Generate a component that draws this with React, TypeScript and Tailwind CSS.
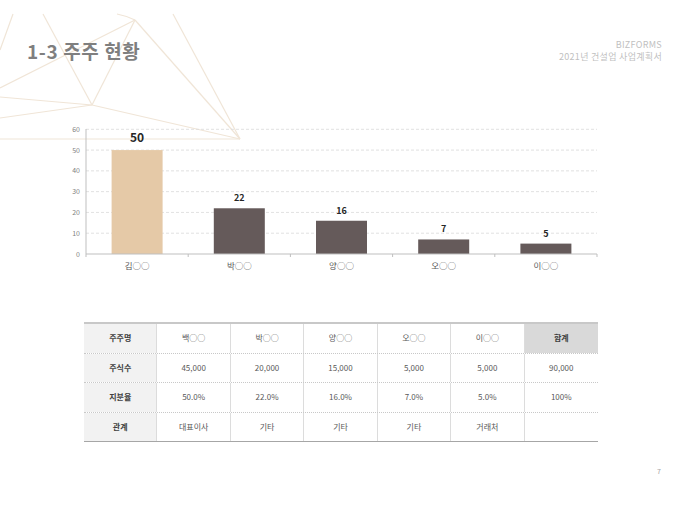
import React from "react";

const bars = [
  { name: "김○○", v: 50, color: "#E5C9A7", big: true },
  { name: "박○○", v: 22, color: "#655A5A" },
  { name: "양○○", v: 16, color: "#655A5A" },
  { name: "오○○", v: 7, color: "#655A5A" },
  { name: "이○○", v: 5, color: "#655A5A" },
];

function Chart() {
  const x0 = 26;
  const x1 = 537;
  const y0 = 134;
  const unit = (134 - 9.3) / 60;
  const cw = (x1 - x0) / 5;
  const ticks = [0, 10, 20, 30, 40, 50, 60];
  return (
    <svg width="550" height="160" viewBox="0 0 550 160" className="block">
      {ticks.map((t) => {
        const y = y0 - t * unit;
        return (
          <g key={t}>
            {t > 0 && (
              <line x1={x0} y1={y} x2={x1} y2={y} stroke="#D9D9D9" strokeWidth="0.8" strokeDasharray="3 2" />
            )}
            <text x="20" y={y + 2.5} fontSize="7" fill="#7F7F7F" textAnchor="end">
              {t}
            </text>
          </g>
        );
      })}
      <line x1={x0} y1={9} x2={x0} y2={y0} stroke="#BFBFBF" strokeWidth="1" />
      {bars.map((b, i) => {
        const cx = x0 + cw / 2 + i * cw;
        const h = b.v * unit;
        return (
          <g key={b.name}>
            <rect x={cx - 25.5} y={y0 - h} width="51" height={h} fill={b.color} />
            <text
              x={cx}
              y={b.big ? y0 - h - 8 : y0 - h - 7}
              fontSize={b.big ? 12 : 9}
              fontWeight="700"
              fill="#262626"
              textAnchor="middle"
            >
              {b.v}
            </text>
            <text x={cx} y={149} fontSize="8.5" fill="#595959" textAnchor="middle">
              {b.name}
            </text>
          </g>
        );
      })}
      <line x1={x0} y1={y0} x2={x1} y2={y0} stroke="#BFBFBF" strokeWidth="1" />
      {[0, 1, 2, 3, 4, 5].map((i) => (
        <line key={i} x1={x0 + i * cw} y1={y0} x2={x0 + i * cw} y2={y0 + 3} stroke="#BFBFBF" strokeWidth="1" />
      ))}
    </svg>
  );
}

const rows = [
  ["주주명", "백○○", "박○○", "양○○", "오○○", "이○○", "합계"],
  ["주식수", "45,000", "20,000", "15,000", "5,000", "5,000", "90,000"],
  ["지분율", "50.0%", "22.0%", "16.0%", "7.0%", "5.0%", "100%"],
  ["관계", "대표이사", "기타", "기타", "기타", "거래처", ""],
];

function Table() {
  return (
    <div className="ml-[84px] w-[514px] border-t-2 border-b border-t-[#C8C8C8] border-b-[#A6A6A6]">
      {rows.map((r, ri) => (
        <div
          key={ri}
          className={
            ri < rows.length - 1
              ? "grid grid-cols-7 h-[29.5px] border-b border-dotted border-b-[#C8C8C8]"
              : "grid grid-cols-7 h-[28.5px]"
          }
        >
          {r.map((c, ci) => {
            const isFirst = ci === 0;
            const isTotalHead = ri === 0 && ci === 6;
            let cls = "flex items-center justify-center text-[8px] ";
            if (isFirst) cls += "bg-[#F2F2F2] font-bold text-[#404040] ";
            else if (isTotalHead) cls += "bg-[#D9D9D9] font-bold text-[#404040] ";
            else cls += "text-[#595959] ";
            if (ci < 6) cls += "border-r border-r-[#DCDCDC]";
            return (
              <div key={ci} className={cls}>
                {c}
              </div>
            );
          })}
        </div>
      ))}
    </div>
  );
}

function Deco() {
  const s = "#F0E5D7";
  const lines: [number, number, number, number][] = [
    [13, 14, 0, 50],
    [43, 14, 92, 105],
    [135, 20, 92, 105],
    [135, 20, 0, 88],
    [135, 20, 240, 139],
    [173, 14, 240, 139],
    [92, 105, 0, 97],
    [92, 105, 0, 118],
    [92, 105, 240, 139],
    [0, 139, 240, 139],
  ];
  return (
    <svg className="absolute left-0 top-0" width="260" height="150" viewBox="0 0 260 150">
      {lines.map((l, i) => (
        <line key={i} x1={l[0]} y1={l[1]} x2={l[2]} y2={l[3]} stroke={s} strokeWidth="1.2" />
      ))}
      <path d="M117 14 Q127 16 135 20" stroke={s} strokeWidth="1.2" fill="none" />
    </svg>
  );
}

export default function App() {
  return (
    <div className="relative w-[680px] h-[510px] bg-white overflow-hidden font-['Noto_Sans_CJK_KR',sans-serif]">
      <Deco />
      <div className="relative">
        <div className="flex justify-between pl-[27px] pr-[18px] pt-[38px]">
          <h1 className="text-[19px] leading-[26px] font-bold tracking-[0.6px] text-[#7F7F7F]">1-3 주주 현황</h1>
          <div className="pt-[1px] text-right text-[9px] leading-[12px] tracking-[0.3px] text-[#BFBFBF]">
            <div>BIZFORMS</div>
            <div>2021년 건설업 사업계획서</div>
          </div>
        </div>
        <div className="ml-[60px] mt-[56px]">
          <Chart />
        </div>
        <div className="mt-[42px]">
          <Table />
        </div>
        <div className="mt-[24px] pr-[19px] text-right text-[7px] leading-[10px] text-[#A6A6A6]">7</div>
      </div>
    </div>
  );
}
